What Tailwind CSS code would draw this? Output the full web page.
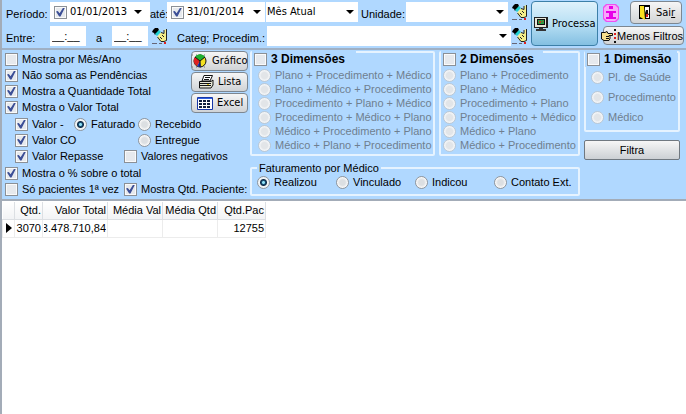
<!DOCTYPE html>
<html lang="pt-BR">
<head>
<meta charset="utf-8">
<title>Faturamento</title>
<script src="https://cdn.jsdelivr.net/npm/@tailwindcss/browser@4"></script>
</head>
<body class="min-h-screen bg-white">
<svg class="hidden">
  <symbol id="hand" viewBox="0 0 18 17">
    <path d="M1 2L3 0H6L7 2L5 5L3 7L2 5L0 4Z" fill="#000"/>
    <path d="M3 6L7 2L9 4L5 8Z" fill="#20d0d0"/>
    <path d="M5.500 8.500L9 4.500L12 5.500L12.500 1.500H14.500V12.500L12 13.500H9L6 11Z" fill="#f4ee8a"/>
    <path d="M9 4.500L12 5.500V2M14.500 1V12.500L12 13.500H9L5.500 9" fill="none" stroke="#222"/>
    <path d="M8 9L10 11M10 7L12 9" stroke="#222" fill="none"/>
    <path d="M0 15.500H5M7 15.500H10" stroke="#667"/><path d="M12 14H14V16H12Z" fill="#e02020"/>
  </symbol>
  <symbol id="arrow" viewBox="0 0 8 4"><path d="M0 0H8L4 4Z" fill="#000"/></symbol>
</svg>
<main class="flex min-h-screen flex-col border-l-2 border-[#a3acb8] font-['Liberation_Sans',Arial,sans-serif] text-[11px] leading-4 text-black
 [&_label]:whitespace-nowrap
 [&_label:has(input)]:flex [&_label:has(input)]:items-center [&_label:has(input)]:gap-1
 [&_input[type=checkbox]]:grid [&_input[type=checkbox]]:size-[13px] [&_input[type=checkbox]]:shrink-0 [&_input[type=checkbox]]:appearance-none [&_input[type=checkbox]]:place-items-center [&_input[type=checkbox]]:border [&_input[type=checkbox]]:border-[#8b9096] [&_input[type=checkbox]]:bg-[#e6e9ed] [&_input[type=checkbox]]:shadow-[inset_0_0_0_1px_#fafafa]
 [&_input[type=checkbox]:checked]:before:size-[9px] [&_input[type=checkbox]:checked]:before:bg-[#3c4f96] [&_input[type=checkbox]:checked]:before:content-[''] [&_input[type=checkbox]:checked]:before:[clip-path:polygon(0_45%,20%_38%,40%_65%,80%_0,100%_0,50%_100%,35%_100%)]
 [&_input[type=radio]]:size-[13px] [&_input[type=radio]]:shrink-0 [&_input[type=radio]]:appearance-none [&_input[type=radio]]:rounded-full [&_input[type=radio]]:border [&_input[type=radio]]:border-[#8f959c] [&_input[type=radio]]:bg-[radial-gradient(#dcdfe2_35%,#f8f8f8_65%)]
 [&_input[type=radio]:checked]:bg-[radial-gradient(circle_at_50%_50%,#8fe0f5_0_1px,#154a70_2px,#102c48_3px,#f0f4f6_4px)]
 [&_input[type=radio]:disabled]:border-[#bcc8d4] [&_input[type=radio]:disabled]:bg-[radial-gradient(#e2e5e8_40%,#f2f4f6_60%)]
 [&_label:has(:disabled)]:text-[#6f7f8f]
 [&_button]:whitespace-nowrap">

  <header class="flex gap-px border-b-2 border-[#9fb0c4] bg-[#b0d8ff] pt-[2px] pr-[2px] pb-[2px] pl-1">
    <div class="flex min-w-0 flex-1 flex-col gap-1">
      <div class="flex h-5 items-stretch">
        <label for="d1" class="w-11 self-center pt-1">Período:</label>
        <div class="flex w-[100px] items-center gap-[3px] bg-white pr-2 pl-1 font-['DejaVu_Sans_Condensed',Tahoma,sans-serif]">
          <input type="checkbox" checked aria-label="Usar data inicial">
          <input id="d1" value="01/01/2013" class="w-0 min-w-0 flex-1">
          <button aria-label="Abrir calendário inicial"><svg class="h-1 w-2"><use href="#arrow"/></svg></button>
        </div>
        <label for="d2" class="w-[17px] self-center pt-1">até:</label>
        <div class="flex w-[98px] items-center gap-[3px] bg-white pr-1 pl-1 font-['DejaVu_Sans_Condensed',Tahoma,sans-serif]">
          <input type="checkbox" checked aria-label="Usar data final">
          <input id="d2" value="31/01/2014" class="w-0 min-w-0 flex-1">
          <button aria-label="Abrir calendário final"><svg class="h-1 w-2"><use href="#arrow"/></svg></button>
        </div>
        <div class="relative ml-px w-[92px]">
          <select aria-label="Intervalo" class="size-full appearance-none bg-white pl-px font-['DejaVu_Sans_Condensed',Tahoma,sans-serif]"><option>Mês Atual</option></select>
          <svg class="pointer-events-none absolute top-2 right-1 h-1 w-2"><use href="#arrow"/></svg>
        </div>
        <label for="un" class="w-12 self-center pt-1 pl-[3px]">Unidade:</label>
        <div class="relative min-w-0 flex-1">
          <select id="un" class="size-full appearance-none bg-white"><option></option></select>
          <svg class="pointer-events-none absolute top-2 right-1 h-1 w-2"><use href="#arrow"/></svg>
        </div>
        <button aria-label="Limpar unidade" class="ml-1 w-[18px]"><svg class="h-[17px] w-[18px]"><use href="#hand"/></svg></button>
      </div>
      <div class="flex h-5 items-stretch">
        <label for="h1" class="w-11 self-center pt-1">Entre:</label>
        <input id="h1" value="__:__" class="w-9 bg-white pl-[2px]">
        <label for="h2" class="w-[26px] self-center pt-1 text-center">a</label>
        <input id="h2" value="__:__" class="w-9 bg-white pl-[2px]">
        <button aria-label="Limpar horário" class="ml-1 w-[18px]"><svg class="h-[17px] w-[18px]"><use href="#hand"/></svg></button>
        <label for="cp" class="w-[97px] self-center pt-1 pl-[7px]">Categ; Procedim.:</label>
        <div class="relative min-w-0 flex-1">
          <select id="cp" class="size-full appearance-none bg-white"><option></option></select>
          <svg class="pointer-events-none absolute top-2 right-1 h-1 w-2"><use href="#arrow"/></svg>
        </div>
        <button aria-label="Limpar categoria" class="ml-px w-[18px]"><svg class="h-[17px] w-[18px]"><use href="#hand"/></svg></button>
      </div>
    </div>
    <button class="-mt-px flex w-[67px] items-center gap-1 rounded-sm border border-[#3c7fa8] bg-linear-to-b from-[#dff1fb] via-[#b8e0f4] to-[#84c0e2] pl-[2px] font-['DejaVu_Sans_Condensed',Tahoma,sans-serif]">
      <svg class="h-4 w-[14px] shrink-0" viewBox="0 0 14 16"><path d="M0 1H14V12H0Z" fill="#222"/><path d="M1 2H12V11H1Z" fill="#e8e8d8"/><path d="M3 3H11V9H3Z" fill="#111"/><path d="M4 4H10V8H4Z" fill="#2c9a40"/><path d="M5 5H7V7H5ZM8 5H9V6H8Z" fill="#c04020"/><path d="M5 12H9V13H12V15H2V13H5Z" fill="#333"/></svg>
      Processa
    </button>
    <div class="-mt-px ml-1 flex w-[81px] flex-col gap-[2px]">
      <div class="flex h-[23px] items-center justify-between pr-[2px]">
        <button aria-label="Informações"><svg class="h-[18px] w-4" viewBox="0 0 16 18"><path d="M3 0H13L16 3V15L13 18H3L0 15V3Z" fill="#f050f0"/><path d="M4 1H12L15 4V14L12 17H4L1 14V4Z" fill="#f7a8fa"/><path d="M6 2H10V5H6ZM3 7H13V9H10V13H13V15H3V13H6V9H3Z" fill="#e800e8"/></svg></button>
        <button class="flex h-full w-[52px] items-center gap-[6px] rounded-sm border border-[#7d8791] bg-linear-to-b from-[#f6f6f6] to-[#d2d4d6] pl-2 font-['DejaVu_Sans_Condensed',Tahoma,sans-serif]">
          <svg class="h-4 w-[11px] shrink-0" viewBox="0 0 11 16"><path d="M0 0H11V14H0Z" fill="#000"/><path d="M1 1H5L6 15L1 12Z" fill="#f8e020"/><path d="M6 2H10V13H6Z" fill="#fff"/><path d="M7 5H9V8L10 10H8L7 13H6V8Z" fill="#111"/><path d="M7 9H9V12H7Z" fill="#d02020"/></svg>
          <span>Sai<u>r</u></span>
        </button>
      </div>
      <button class="flex h-[19px] items-center rounded-sm border border-[#7d8791] bg-linear-to-b from-[#f6f6f6] to-[#d2d4d6]">
        <svg class="-ml-[3px] h-[14px] w-4 shrink-0" viewBox="0 0 16 14"><path d="M.5 3.500H4L6 2.500L7 4.500H11.500V6.500H8L9 7.500V9.500L8 11.500H3L.5 10Z" fill="#f8e08c" stroke="#111"/><path d="M5 7.500H8M5 9.500H8" stroke="#111"/><path d="M14 0V14" stroke="#111" stroke-width="2" stroke-dasharray="2 2"/><path d="M13 4H15V6H13ZM13 8H15V10H13Z" fill="#e02020"/></svg>
        Menos Filtros
      </button>
    </div>
  </header>

  <section class="flex items-start border-b-2 border-[#a3acb8] bg-[#b0d8ff] pr-[6px] pb-[2px]">
    <div class="flex w-[246px] shrink-0 flex-col pt-px pl-[3px]">
      <div class="flex justify-between">
        <div class="flex flex-col">
          <label><input type="checkbox">Mostra por Mês/Ano</label>
          <label><input type="checkbox" checked>Não soma as Pendências</label>
          <label><input type="checkbox" checked>Mostra a Quantidade Total</label>
          <label><input type="checkbox" checked>Mostra o Valor Total</label>
        </div>
        <div class="flex w-[57px] flex-col gap-px font-['DejaVu_Sans_Condensed',Tahoma,sans-serif] [&>button]:flex [&>button]:h-5 [&>button]:items-center [&>button]:gap-1 [&>button]:rounded-sm [&>button]:border [&>button]:border-[#7d8791] [&>button]:bg-linear-to-b [&>button]:from-[#f6f6f6] [&>button]:to-[#d0d3d6]">
          <button><svg class="h-[14px] w-4 shrink-0" viewBox="0 0 16 14"><path d="M0 1H16M0 13H16" stroke="#777" stroke-dasharray="1 3"/><circle cx="8" cy="7" r="6" fill="#f4e020" stroke="#111"/><path d="M8 7L3 3A6 6 0 0 1 13 3Z" fill="#20b030"/><path d="M8 7L3 3A6 6 0 0 0 5 12Z" fill="#e02020"/><path d="M8 7L5 12A6 6 0 0 0 9 13Z" fill="#2030c0"/><path d="M8 7V13M8 7L3 3M8 7L13 3" stroke="#111"/></svg>Gráfico</button>
          <button class="pl-[7px]"><svg class="h-[14px] w-[15px] shrink-0" viewBox="0 0 15 14"><path d="M5 .5H13.500L11 6H3Z" fill="#fff" stroke="#111"/><path d="M6 2.500H11M5 4.500H10" stroke="#111"/><path d="M.5 6.500H12L14 5V10L12 13H.5Z" fill="#e8e8d8" stroke="#111"/><path d="M1 8.500H12M1 10.500H12" stroke="#111"/><path d="M8 9H10V10H8Z" fill="#d8c020"/></svg>Lista</button>
          <button class="pl-[5px]"><svg class="h-[13px] w-4 shrink-0" viewBox="0 0 16 13"><path d="M.5.5H15.500V12.500H.5Z" fill="#fff" stroke="#1838a8"/><path d="M1 1.500H15" stroke="#3060e0"/><path d="M2 4H14M2 7H14M2 10H14" stroke="#102040" stroke-width="2" stroke-dasharray="3 1"/></svg>Excel</button>
        </div>
      </div>
      <div class="grid grid-cols-[59px_64px_auto] pt-px pl-[10px] [&>label]:h-4">
        <label><input type="checkbox" checked>Valor -</label>
        <label><input type="radio" name="sit" checked>Faturado</label>
        <label><input type="radio" name="sit">Recebido</label>
        <label><input type="checkbox" checked>Valor CO</label>
        <label class="col-start-3"><input type="radio" name="sit">Entregue</label>
      </div>
      <div class="grid grid-cols-[109px_auto] pb-px pl-[10px]">
        <label><input type="checkbox" checked>Valor Repasse</label>
        <label><input type="checkbox">Valores negativos</label>
      </div>
      <label><input type="checkbox" checked>Mostra o % sobre o total</label>
      <div class="grid grid-cols-[119px_auto]">
        <label><input type="checkbox">Só pacientes 1ª vez</label>
        <label><input type="checkbox" checked>Mostra Qtd. Paciente:</label>
      </div>
    </div>

    <div class="flex min-w-0 flex-1 items-start gap-1 pt-px pl-[2px]">
      <div class="flex min-w-0 flex-1 flex-col gap-[6px]">
        <div class="flex gap-1">
          <fieldset class="w-[185px] rounded-xs border-2 border-[#e6f3ff] pb-[2px] pl-[6px] [&>label]:h-[14px]">
            <legend class="float-left -mt-[2px] -ml-[6px] w-[104px] bg-[#b0d8ff] pb-px pl-[2px] text-[12px] font-bold"><label><input type="checkbox">3 Dimensões</label></legend>
            <div class="clear-both"></div>
            <label><input type="radio" name="g3" disabled>Plano + Procedimento + Médico</label>
            <label><input type="radio" name="g3" disabled>Plano + Médico + Procedimento</label>
            <label><input type="radio" name="g3" disabled>Procedimento + Plano + Médico</label>
            <label><input type="radio" name="g3" disabled>Procedimento + Médico + Plano</label>
            <label><input type="radio" name="g3" disabled>Médico + Procedimento + Plano</label>
            <label><input type="radio" name="g3" disabled>Médico + Plano + Procedimento</label>
          </fieldset>
          <fieldset class="min-w-0 flex-1 rounded-xs border-2 border-[#e6f3ff] pb-[2px] pl-[2px] [&>label]:h-[14px]">
            <legend class="float-left -mt-[2px] -ml-[2px] w-[102px] bg-[#b0d8ff] pb-px pl-[2px] text-[12px] font-bold"><label><input type="checkbox">2 Dimensões</label></legend>
            <div class="clear-both"></div>
            <label><input type="radio" name="g2" disabled>Plano + Procedimento</label>
            <label><input type="radio" name="g2" disabled>Plano + Médico</label>
            <label><input type="radio" name="g2" disabled>Procedimento + Plano</label>
            <label><input type="radio" name="g2" disabled>Procedimento + Médico</label>
            <label><input type="radio" name="g2" disabled>Médico + Plano</label>
            <label><input type="radio" name="g2" disabled>Médico + Procedimento</label>
          </fieldset>
        </div>
        <fieldset class="rounded-xs border-2 border-[#e6f3ff] px-[5px] pb-1">
          <legend class="px-[2px] leading-3">Faturamento por Médico</legend>
          <div class="grid grid-cols-[79px_79px_79px_auto]">
            <label><input type="radio" name="fat" checked>Realizou</label>
            <label><input type="radio" name="fat">Vinculado</label>
            <label><input type="radio" name="fat">Indicou</label>
            <label><input type="radio" name="fat">Contato Ext.</label>
          </div>
        </fieldset>
      </div>
      <div class="flex w-[96px] flex-col gap-2">
        <fieldset class="rounded-xs border-2 border-[#e6f3ff] pb-[3px] pl-[5px] [&>label]:h-5">
          <legend class="float-left -mt-[2px] -ml-[6px] w-[92px] bg-[#b0d8ff] pl-[2px] text-[12px] font-bold"><label><input type="checkbox">1 Dimensão</label></legend>
          <div class="clear-both"></div>
          <label><input type="radio" name="g1" disabled>Pl. de Saúde</label>
          <label><input type="radio" name="g1" disabled>Procedimento</label>
          <label><input type="radio" name="g1" disabled>Médico</label>
        </fieldset>
        <button class="h-5 rounded-xs border border-[#707880] bg-linear-to-b from-[#f6f6f6] to-[#ccd0d4]">Filtra</button>
      </div>
    </div>
  </section>

  <div class="flex-1 bg-white">
    <table class="mt-px w-[263px] table-fixed border-collapse text-right [&_td]:h-[18px] [&_td]:overflow-hidden [&_td]:border [&_td]:border-[#ececec] [&_td]:px-px [&_td]:whitespace-nowrap [&_th]:h-[17px] [&_th]:border-r [&_th]:border-b [&_th]:border-[#dcdfe3] [&_th]:bg-linear-to-b [&_th]:from-white [&_th]:to-[#f2f3f5] [&_th]:px-px [&_th]:font-normal [&_th]:whitespace-nowrap">
      <colgroup><col class="w-3"><col class="w-7"><col class="w-[65px]"><col class="w-[55px]"><col class="w-[55px]"><col class="w-12"></colgroup>
      <thead><tr><th></th><th>Qtd.</th><th>Valor Total</th><th>Média Val</th><th>Média Qtd</th><th>Qtd.Pac</th></tr></thead>
      <tbody><tr><td><svg class="ml-[2px] h-[10px] w-[6px]" viewBox="0 0 6 10"><path d="M0 0L6 5L0 10Z"/></svg></td><td>3070</td><td><div class="flex justify-end overflow-hidden">3.478.710,84</div></td><td></td><td></td><td>12755</td></tr></tbody>
    </table>
  </div>
</main>
</body>
</html>
